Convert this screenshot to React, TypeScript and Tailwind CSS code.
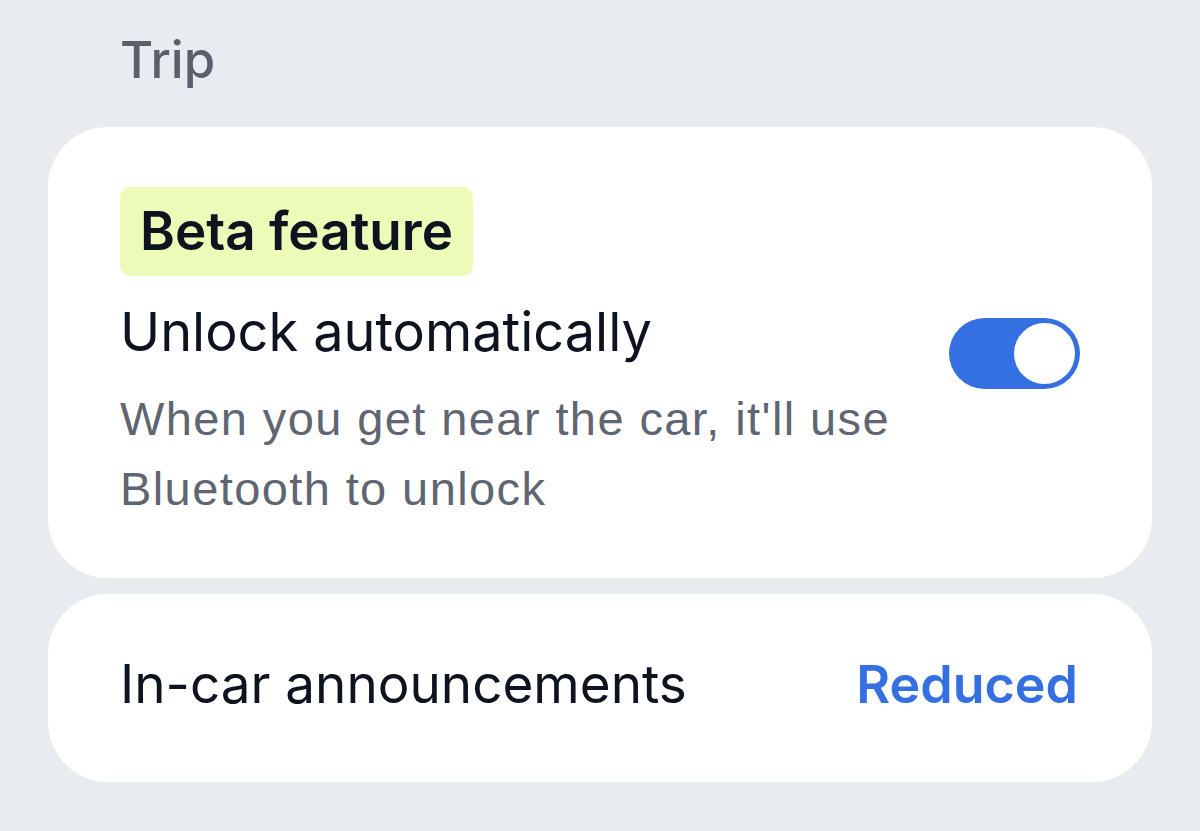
export default function App() {
    return (
        <div className="h-[831px] w-full overflow-hidden bg-[#e8ebf0] px-[48px] font-['Inter',sans-serif]">
            <div className="h-[127px] pl-[72px] pt-[34px]">
                <h2 className="text-[51px] leading-[51px] font-medium text-[#5a606b]">Trip</h2>
            </div>

            <div className="rounded-[60px] bg-white px-[72px] pt-[60px] pb-[54px]">
                <div className="inline-flex h-[89px] items-center rounded-[10px] bg-[#ecfcb8] px-[20px]">
                    <span className="text-[53px] font-semibold text-[#0d1420]">Beta feature</span>
                </div>
                <div className="mt-[29px] flex items-start justify-between">
                    <div>
                        <div className="text-[54px] leading-[54px] text-[#0d1420]">Unlock automatically</div>
                        <p className="mt-[25px] font-['Liberation_Sans',sans-serif] text-[47px] leading-[70px] tracking-[1.4px] text-[#5f6571]">
                            When you get near the car, it'll use
                            <br />
                            Bluetooth to unlock
                        </p>
                    </div>
                    <div className="mt-[13px] flex h-[71px] w-[131px] items-center justify-end rounded-full bg-[#3570e3] pr-[5px]">
                        <div className="h-[61px] w-[61px] rounded-full bg-white" />
                    </div>
                </div>
            </div>

            <div className="mt-[16px] flex h-[188px] items-center justify-between rounded-[60px] bg-white pl-[72px] pr-[74px] pb-[6px]">
                <span className="text-[53px] text-[#0d1420]">In-car announcements</span>
                <span className="text-[52px] font-semibold text-[#3570e3]">Reduced</span>
            </div>
        </div>
    );
}
